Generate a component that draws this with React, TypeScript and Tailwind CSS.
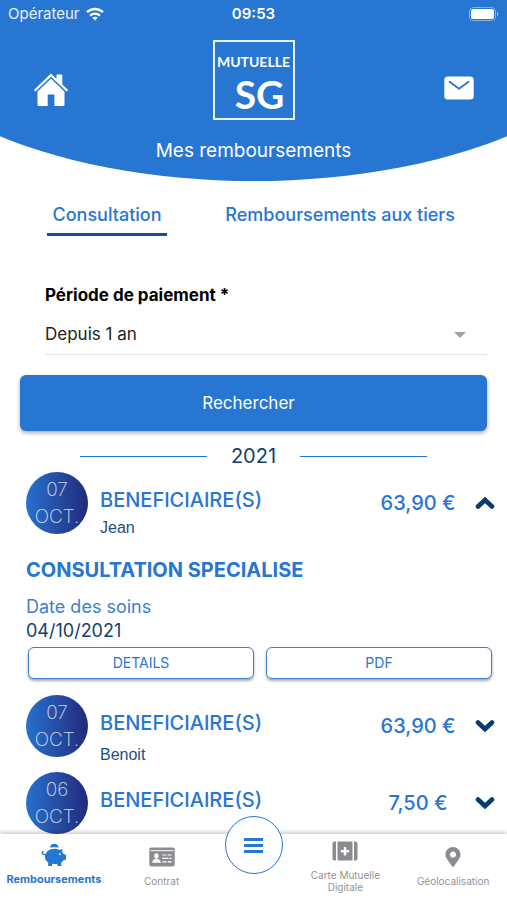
import type { ReactNode } from "react";
import { FaMapMarkerAlt } from "react-icons/fa";

function WifiIcon() {
  return (
    <svg viewBox="0 0 18 14" className="h-3.5 w-[18px]" fill="none" stroke="white" strokeWidth="2.4" aria-hidden="true">
      <path d="M1 5.2C5.6.9 12.4.9 17 5.2" />
      <path d="M4.1 8.6c2.8-2.7 7-2.7 9.8 0" />
      <path d="M6.4 10.8c1.5-1.4 3.7-1.4 5.2 0L9 13.6z" fill="white" stroke="none" />
    </svg>
  );
}

function BatteryIcon() {
  return (
    <svg viewBox="0 0 30 14" className="h-3.5 w-[30px]" aria-hidden="true">
      <rect x="0.5" y="0.5" width="26" height="13" rx="4" fill="none" stroke="white" strokeOpacity="0.45" />
      <rect x="2" y="2" width="23" height="10" rx="2.5" fill="white" />
      <path d="M28 4.8c2 .9 2 3.500 0 4.400z" fill="white" fillOpacity="0.5" />
    </svg>
  );
}

function HomeIcon() {
  return (
    <svg viewBox="0 0 36 34" className="h-[34px] w-9" fill="white" aria-hidden="true">
      <path d="M18 .6 23.500 5.800V2.500c0-.6.4-1 1-1h3.800c.6 0 1 .4 1 1v8.900l5.800 5.500-1.500 1.700L18 3.700 2.400 18.600.9 16.900z" />
      <path d="M18 5.700 31.500 18.500V31.500c0 .8-.6 1.500-1.400 1.500h-8.700V21.500h-6.700V33H5.900c-.8 0-1.400-.7-1.400-1.500v-13z" />
    </svg>
  );
}

function MailIcon() {
  return (
    <svg viewBox="0 0 30 24" className="h-6 w-[30px]" aria-hidden="true">
      <rect x="0.300" y="0.500" width="29.400" height="23" rx="3.500" fill="white" />
      <path d="M5.500 5.800 15 12.800l9.600-7" fill="none" stroke="#2776d2" strokeWidth="1.800" strokeLinecap="round" strokeLinejoin="round" />
    </svg>
  );
}

function Chevron({ open }: { open: boolean }) {
  return (
    <svg viewBox="0 0 20 14" className="h-3.5 w-5" fill="none" stroke="#083b6f" strokeWidth="4.600" strokeLinecap="round" aria-hidden="true">
      <path d={open ? "M3 10.500 10 4l7 6.500" : "M3 3.500 10 10l7-6.500"} />
    </svg>
  );
}

function PiggyIcon() {
  return (
    <svg viewBox="0 0 26 24" className="h-6 w-[26px]" fill="#2776d2" aria-hidden="true">
      <path d="M9 4.800C9.300 2.200 11 .8 13.300.8s4 1.400 4.300 4c-2.700-.6-5.900-.6-8.600 0z" />
      <path d="M6.400 8.300c1.500-1.400 3.900-2.500 6.700-2.500 2 0 3.800.5 5.300 1.300.8-.7 1.800-1 3-.9l-.2 2.700c.8.700 1.200 1.400 1.600 2.300l2.200.5v4.700l-2.500.8c-.6 1-1.300 1.700-2.200 2.300v3.400h-3.900v-2.200c-1.700.3-3.900.3-5.400 0v2.200H7.200v-3.500c-2-1.300-3.200-3.200-3.200-5.500 0-.6.1-1.100.2-1.600-2.200.2-3.800-1-3.700-2.700 0-1.100.9-1.900 2-1.900v1.500c-.6.1-.7 1-.2 1.400.6.600 1.700.6 2.500.2.400-.9.900-1.800 1.600-2.500z" />
      <circle cx="18.900" cy="11.200" r="0.900" fill="white" />
    </svg>
  );
}

function ContractIcon() {
  return (
    <svg viewBox="0 0 26 20" className="h-5 w-[26px]" fill="none" aria-hidden="true">
      <rect x="0.300" y="0.500" width="25.400" height="19" rx="2" fill="#8c8c90" />
      <path d="M1.500 3.700h23" stroke="white" strokeWidth="1" />
      <ellipse cx="7.400" cy="9" rx="2.200" ry="2.800" fill="white" />
      <path d="M3.200 15.800c0-2.600 1.500-3.600 3-3.800h2.500c1.500.2 3 1.200 3 3.800z" fill="white" />
      <path d="M13.300 8h4m1.200 0h4.200M13.300 11.400h6.200m1 0h2.200M13.300 14.800h4.200m1.200 0h4" stroke="white" strokeWidth="1.200" />
    </svg>
  );
}

function CardIcon() {
  return (
    <svg viewBox="0 0 26 20" className="h-5 w-[26px]" fill="#8c8c90" aria-hidden="true">
      <path d="M4 .5v19H2.500A2 2 0 0 1 .5 17.500v-15a2 2 0 0 1 2-2zM22 .5v19h1.500a2 2 0 0 0 2-2v-15a2 2 0 0 0-2-2zM5.500 .5h15v19h-15z" />
      <path d="M13 6v8.400M8.800 10.200h8.400" stroke="white" strokeWidth="2.400" />
    </svg>
  );
}

function DateBadge({ day, month }: { day: string; month: string }) {
  return (
    <div className="flex size-[62px] shrink-0 flex-col items-center justify-center rounded-full bg-linear-to-r from-[#2472cf] to-[#212a7b] text-[19px] leading-[27px] font-extralight text-white/80">
      <span>{day}</span>
      <span>{month}</span>
    </div>
  );
}

type RowProps = { day: string; name?: string; amount: string; open?: boolean };

function RefundRow({ day, name, amount, open = false }: RowProps) {
  return (
    <div className="flex items-center pr-3 pl-[26px]">
      <DateBadge day={day} month="OCT." />
      <div className="ml-3 h-[62px] flex-1 pt-3.5">
        <h2 className="text-xl leading-7 font-medium text-[#2776d2]">BENEFICIAIRE(S)</h2>
        <p className={`font-['Liberation_Sans',sans-serif] text-base text-[#1b4f80] ${open ? "leading-7" : "leading-9"}`}>{name}</p>
      </div>
      <div className="w-20 text-center text-xl leading-7 font-medium whitespace-nowrap text-[#2776d2]">{amount}</div>
      <button type="button" aria-label={open ? "Replier" : "Déplier"} aria-expanded={open} className="ml-[17px] flex h-8 w-5 items-center justify-center">
        <Chevron open={open} />
      </button>
    </div>
  );
}

function OutlineButton({ children }: { children: ReactNode }) {
  return (
    <button type="button" className="h-8 flex-1 rounded-md border border-[#3f7fd0] bg-white text-sm text-[#2776d2] shadow-[0_2px_3px_rgba(0,0,0,0.35)]">
      {children}
    </button>
  );
}

function NavItem({ icon, children, active = false }: { icon: ReactNode; children: ReactNode; active?: boolean }) {
  return (
    <a href="#" aria-current={active ? "page" : undefined} className={`flex flex-col items-center justify-center text-center leading-3 ${active ? "gap-1.5 pb-1.5 text-[11px] font-bold text-[#2776d2]" : "gap-2 text-[10px] text-[#929296]"}`}>
      {icon}
      <span>{children}</span>
    </a>
  );
}

export default function App() {
  return (
    <div className="flex h-screen flex-col overflow-hidden bg-white font-['Inter',sans-serif]">
      <header className="shrink-0 bg-[#2776d2] pb-4 text-white [clip-path:ellipse(76%_100%_at_50%_0)]">
        <div className="grid h-7 grid-cols-3 items-center px-2 text-[15px]">
          <div className="flex items-center gap-1.5 text-white/90">
            Opérateur
            <WifiIcon />
          </div>
          <div className="text-center font-semibold">09:53</div>
          <div className="flex justify-end">
            <BatteryIcon />
          </div>
        </div>
        <div className="mt-3 flex items-center justify-between px-[33px]">
          <button type="button" aria-label="Accueil" className="mt-5 w-10">
            <HomeIcon />
          </button>
          <div className="flex h-20 w-[82px] flex-col items-center border-2 border-white/90 pt-2.5 font-['Lato',sans-serif] font-bold">
            <span className="text-sm leading-5">MUTUELLE</span>
            <span className="pl-3 text-[39px] leading-[44px]">SG</span>
          </div>
          <button type="button" aria-label="Messagerie" className="mt-4 flex w-10 justify-end">
            <MailIcon />
          </button>
        </div>
        <h1 className="mt-4 text-center text-[19px] leading-[29px]">Mes remboursements</h1>
      </header>

      <main className="min-h-0 flex-1 overflow-y-auto [scrollbar-width:none]">
        <nav className="flex items-start justify-between pt-4 pr-[52px] pl-[47px] text-lg font-medium text-[#2776d2]">
          <a href="#" aria-current="page" className="w-[120px] border-b-[3px] border-[#17508c] pt-1 pb-1 text-center">
            Consultation
          </a>
          <a href="#" className="pt-1">
            Remboursements aux tiers
          </a>
        </nav>

        <form className="mt-[45px]" onSubmit={(e) => e.preventDefault()}>
          <div className="mr-5 ml-[45px] border-b border-[#e3e3e3]">
            <label htmlFor="periode" className="block text-[17px] leading-7 font-bold text-black">
              Période de paiement *
            </label>
            <div className="relative mt-3 mb-[5px]">
              <select id="periode" className="block h-7 w-full appearance-none bg-white text-[17px] text-[#222]">
                <option>Depuis 1 an</option>
              </select>
              <span className="pointer-events-none absolute top-1/2 right-[21px] -translate-y-1/2 border-x-6 border-t-6 border-x-transparent border-t-[#a3a3a3]" />
            </div>
          </div>
          <div className="mt-5 px-5">
            <button type="submit" className="h-14 w-full rounded-md bg-[#2776d2] pt-0.5 pr-2.5 text-[17px] text-white shadow-[0_2px_4px_rgba(0,0,0,0.35)]">
              Rechercher
            </button>
          </div>
        </form>

        <div className="mt-[11px] flex items-center gap-6 px-20">
          <span className="h-px flex-1 bg-[#2776d2]" />
          <span className="text-xl leading-7 text-[#123f6e]">2021</span>
          <span className="h-px flex-1 bg-[#2776d2]" />
        </div>

        <section className="mt-0.5">
          <RefundRow day="07" name="Jean" amount="63,90 €" open />
          <div className="mt-[22px] px-[26px]">
            <h3 className="text-xl leading-7 font-bold text-[#2776d2]">CONSULTATION SPECIALISE</h3>
            <dl className="mt-[11px] text-lg leading-6">
              <dt className="text-[#3c80d2]">Date des soins</dt>
              <dd className="text-[#123f6e]">04/10/2021</dd>
            </dl>
          </div>
          <div className="mt-1 flex gap-3 pr-[15px] pl-7">
            <OutlineButton>DETAILS</OutlineButton>
            <OutlineButton>PDF</OutlineButton>
          </div>
          <div className="mt-4 flex flex-col gap-[15px]">
            <RefundRow day="07" name="Benoit" amount="63,90 €" />
            <RefundRow day="06" amount="7,50 €" />
          </div>
        </section>
      </main>

      <nav className="relative grid h-[66px] shrink-0 grid-cols-[1fr_1fr_76px_1fr_1fr] bg-white shadow-[0_-2px_4px_rgba(0,0,0,0.2)]">
        <NavItem icon={<PiggyIcon />} active>
          Remboursements
        </NavItem>
        <NavItem icon={<ContractIcon />}>Contrat</NavItem>
        <button type="button" aria-label="Menu" className="-mt-[18px] flex size-[58px] flex-col items-center justify-center gap-[3px] justify-self-center rounded-full border border-[#2776d2] bg-white">
          <span className="h-[3px] w-[19px] bg-[#2776d2]" />
          <span className="h-[3px] w-[19px] bg-[#2776d2]" />
          <span className="h-[3px] w-[19px] bg-[#2776d2]" />
        </button>
        <NavItem icon={<CardIcon />}>
          Carte Mutuelle
          <br />
          Digitale
        </NavItem>
        <NavItem icon={<FaMapMarkerAlt className="h-5 w-[26px] text-[#8c8c90]" />}>Géolocalisation</NavItem>
      </nav>
    </div>
  );
}
